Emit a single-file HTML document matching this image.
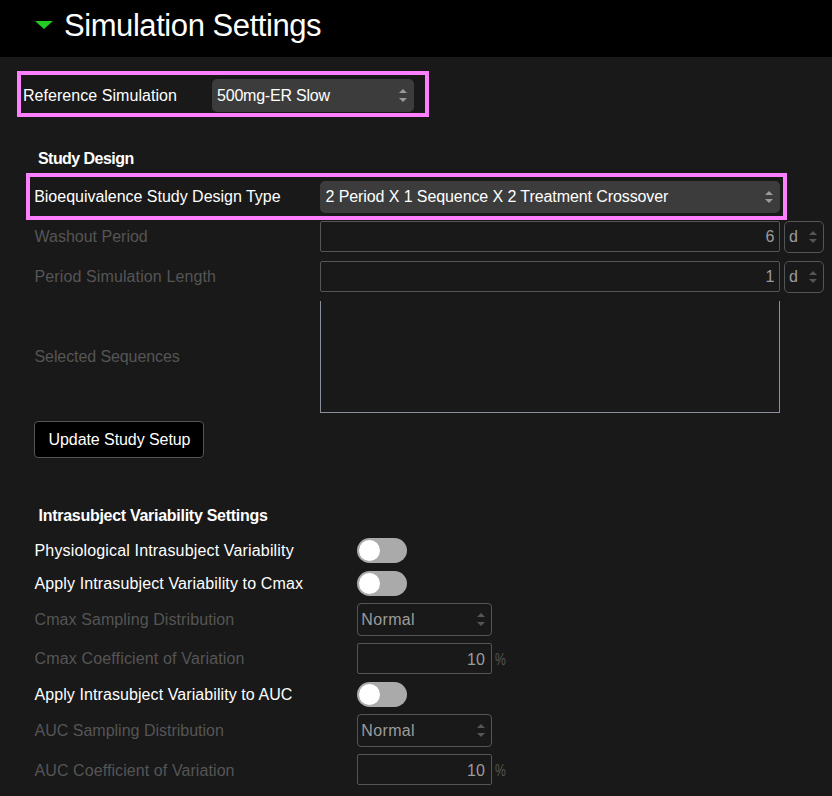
<!DOCTYPE html>
<html>
<head>
<meta charset="utf-8">
<style>
html,body{margin:0;padding:0;}
body{width:832px;height:796px;overflow:hidden;background:#191919;position:relative;font-family:"Liberation Sans",sans-serif;color:#fff;}
.a{position:absolute;}
.t{position:absolute;white-space:nowrap;font-size:16px;line-height:16px;}
.dim{color:#555555;}
.hdr{left:0;top:0;width:832px;height:57px;background:#000;}
.pink{position:absolute;border:4px solid #ff80ff;box-sizing:border-box;}
.sel{position:absolute;background:#3c3c3c;border-radius:5px;box-sizing:border-box;}
.box{position:absolute;border:1px solid #555;border-radius:2px;box-sizing:border-box;}
.rbox{position:absolute;border:1px solid #555;border-radius:5px;box-sizing:border-box;}
.arr{position:absolute;width:0;height:0;border-left:4px solid transparent;border-right:4px solid transparent;}
.up{border-bottom:4px solid #9a9a9a;}
.dn{border-top:4px solid #9a9a9a;}
.up2{border-bottom:4px solid #555;}
.dn2{border-top:4px solid #555;}
.tog{position:absolute;width:50px;height:25px;border-radius:13px;background:#aaaaaa;}
.knob{position:absolute;left:2px;top:2px;width:21px;height:21px;border-radius:50%;background:#fff;}
.val{color:#9c9c9c;}
</style>
</head>
<body>
<div class="a hdr"></div>
<!-- green triangle -->
<div class="a" style="left:35px;top:21px;width:0;height:0;border-left:9px solid transparent;border-right:9px solid transparent;border-top:8px solid #22cc22;"></div>
<div class="t" style="left:64px;top:9.8px;font-size:31px;line-height:31px;letter-spacing:-0.43px;">Simulation Settings</div>

<!-- Reference Simulation -->
<div class="pink" style="left:17px;top:71px;width:412px;height:46px;"></div>
<div class="t" style="left:23px;top:87.5px;letter-spacing:0.05px;">Reference Simulation</div>
<div class="sel" style="left:212px;top:79px;width:202px;height:33px;"></div>
<div class="t" style="left:217px;top:87.5px;letter-spacing:-0.21px;">500mg-ER Slow</div>
<div class="arr up" style="left:399px;top:89px;"></div>
<div class="arr dn" style="left:399px;top:98px;"></div>

<!-- Study Design -->
<div class="t" style="left:38px;top:151px;font-weight:bold;letter-spacing:-0.55px;">Study Design</div>
<div class="pink" style="left:26px;top:173px;width:761px;height:47px;"></div>
<div class="t" style="left:34.2px;top:188.8px;letter-spacing:-0.02px;">Bioequivalence Study Design Type</div>
<div class="sel" style="left:320px;top:181px;width:460px;height:32px;"></div>
<div class="t" style="left:325.5px;top:188.5px;letter-spacing:-0.09px;">2 Period X 1 Sequence X 2 Treatment Crossover</div>
<div class="arr up" style="left:765px;top:191px;"></div>
<div class="arr dn" style="left:765px;top:199px;"></div>

<!-- Washout -->
<div class="t dim" style="left:34.5px;top:228.5px;">Washout Period</div>
<div class="box" style="left:320px;top:221px;width:460px;height:31px;"></div>
<div class="t val" style="left:765.5px;top:228.5px;">6</div>
<div class="rbox" style="left:784px;top:221px;width:40px;height:32px;"></div>
<div class="t val" style="left:789px;top:228.5px;">d</div>
<div class="arr up2" style="left:809px;top:231px;"></div>
<div class="arr dn2" style="left:809px;top:239px;"></div>

<!-- Period Simulation Length -->
<div class="t dim" style="left:34.5px;top:268.5px;letter-spacing:0.117px;">Period Simulation Length</div>
<div class="box" style="left:320px;top:261px;width:460px;height:31px;"></div>
<div class="t val" style="left:765.5px;top:268.5px;">1</div>
<div class="rbox" style="left:784px;top:261px;width:40px;height:32px;"></div>
<div class="t val" style="left:789px;top:268.5px;">d</div>
<div class="arr up2" style="left:809px;top:271px;"></div>
<div class="arr dn2" style="left:809px;top:279px;"></div>

<!-- Selected Sequences -->
<div class="t dim" style="left:34.5px;top:349.3px;letter-spacing:-0.088px;">Selected Sequences</div>
<div class="a" style="left:320px;top:301px;width:460px;height:112px;border:1px solid #8a9099;border-top:none;box-sizing:border-box;"></div>

<!-- Update button -->
<div class="a" style="left:34px;top:421px;width:170px;height:37px;background:#000;border:1px solid #555;border-radius:4px;box-sizing:border-box;"></div>
<div class="t" style="left:48.5px;top:431.7px;letter-spacing:-0.07px;">Update Study Setup</div>

<!-- Intrasubject -->
<div class="t" style="left:38.5px;top:507.5px;font-weight:bold;letter-spacing:-0.28px;">Intrasubject Variability Settings</div>

<div class="t" style="left:34.5px;top:543px;letter-spacing:0.162px;">Physiological Intrasubject Variability</div>
<div class="tog" style="left:357px;top:538px;"><div class="knob"></div></div>

<div class="t" style="left:34.5px;top:576.2px;letter-spacing:0.124px;">Apply Intrasubject Variability to Cmax</div>
<div class="tog" style="left:357px;top:571px;"><div class="knob"></div></div>

<div class="t dim" style="left:34.5px;top:612px;letter-spacing:0.092px;">Cmax Sampling Distribution</div>
<div class="rbox" style="left:357px;top:603px;width:135px;height:32.5px;border-radius:4px;"></div>
<div class="t val" style="left:361.3px;top:612.3px;letter-spacing:0.35px;">Normal</div>
<div class="arr up2" style="left:477px;top:613px;"></div>
<div class="arr dn2" style="left:477px;top:622px;"></div>

<div class="t dim" style="left:34.5px;top:651.3px;letter-spacing:0.15px;">Cmax Coefficient of Variation</div>
<div class="box" style="left:357px;top:643px;width:135px;height:31px;"></div>
<div class="t val" style="left:467px;top:651.8px;">10</div>
<div class="t dim" style="left:494.5px;top:651.8px;transform:scaleX(0.76);transform-origin:0 0;">%</div>

<div class="t" style="left:34.5px;top:687.3px;letter-spacing:0.083px;">Apply Intrasubject Variability to AUC</div>
<div class="tog" style="left:357px;top:682px;"><div class="knob"></div></div>

<div class="t dim" style="left:34.5px;top:723px;">AUC Sampling Distribution</div>
<div class="rbox" style="left:357px;top:714px;width:135px;height:32.5px;border-radius:4px;"></div>
<div class="t val" style="left:361.3px;top:723.3px;letter-spacing:0.35px;">Normal</div>
<div class="arr up2" style="left:477px;top:724px;"></div>
<div class="arr dn2" style="left:477px;top:733px;"></div>

<div class="t dim" style="left:34.5px;top:763px;letter-spacing:0.085px;">AUC Coefficient of Variation</div>
<div class="box" style="left:357px;top:754px;width:135px;height:31px;"></div>
<div class="t val" style="left:467px;top:763px;">10</div>
<div class="t dim" style="left:494.5px;top:763px;transform:scaleX(0.76);transform-origin:0 0;">%</div>
</body>
</html>
